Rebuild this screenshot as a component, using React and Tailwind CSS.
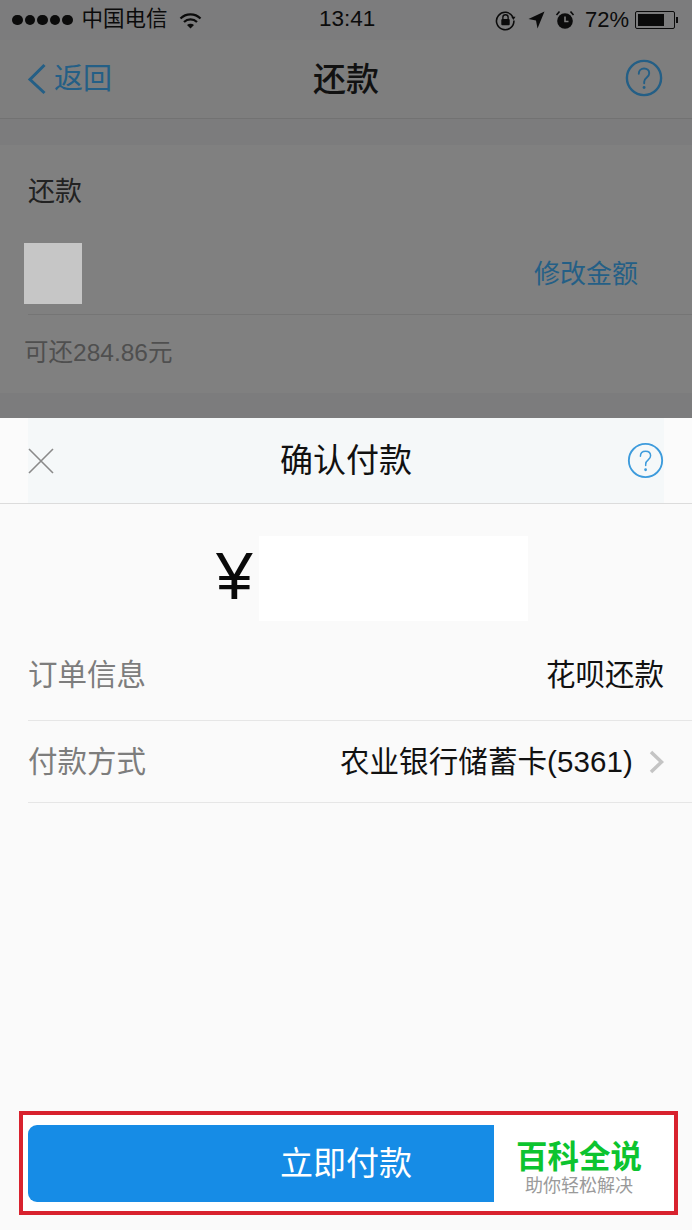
import React from 'react';

function HelpIcon({ className, stroke, width = 2.5 }) {
    return (
        <svg className={className} viewBox="0 0 40 40" fill="none">
            <ellipse cx="20" cy="20" rx="18" ry="18" stroke={stroke} strokeWidth={width} />
            <path d="M14.5 15.5c0-3.4 2.4-5.5 5.6-5.5 3.2 0 5.4 2 5.4 4.9 0 2-1 3.200-2.600 4.500-1.800 1.400-2.700 2.500-2.700 4.600v1.500" stroke={stroke} strokeWidth={width * 0.8} strokeLinecap="round" />
            <circle cx="20.100" cy="30" r="1.500" fill={stroke} />
        </svg>
    );
}

function StatusBar() {
    return (
        <div className="h-[40px] pl-[12px] pr-[14px] flex items-center justify-between text-[#0b0b0b] relative">
            <div className="flex items-center">
                <div className="flex gap-[2px]">
                    {[0, 1, 2, 3, 4].map((i) => (
                        <span key={i} className="w-[10.500px] h-[10.500px] rounded-full bg-[#0b0b0b]" />
                    ))}
                </div>
                <span className="ml-[9px] text-[21.500px] leading-none">中国电信</span>
                <svg className="ml-[11px] w-[23px] h-[17px]" viewBox="0 0 23 17" fill="none" stroke="#0b0b0b" strokeWidth="2.200">
                    <path d="M1.500 6.500c5.500-5.500 14.500-5.500 20 0" />
                    <path d="M5 10c3.600-3.500 9.400-3.500 13 0" />
                    <path d="M11.500 16.500 8 13c2-1.800 5-1.800 7 0z" fill="#0b0b0b" stroke="none" />
                </svg>
            </div>
            <span className="absolute left-[319px] top-[5px] text-[22.500px] leading-[28px] font-['Liberation_Sans',sans-serif]">13:41</span>
            <div className="flex items-center">
                <svg className="w-[21px] h-[21px]" viewBox="0 0 20 20" fill="none">
                    <path d="M17 6.500A8.300 8.300 0 1 0 18 10" stroke="#0b0b0b" strokeWidth="1.500" />
                    <path d="M15.500 6.500h4l-2 3z" fill="#0b0b0b" />
                    <rect x="6" y="8.500" width="8" height="6" rx="1" fill="#0b0b0b" />
                    <path d="M7.500 8.500V7a2.500 2.500 0 0 1 5 0v1.500" stroke="#0b0b0b" strokeWidth="1.300" />
                </svg>
                <svg className="ml-[12px] w-[17px] h-[18px]" viewBox="0 0 17 18">
                    <path d="M16.500 0.500 9.500 17.500 8 9.500 0.500 8z" fill="#0b0b0b" />
                </svg>
                <svg className="ml-[10px] w-[20px] h-[20px]" viewBox="0 0 19 20" fill="none">
                    <circle cx="9.500" cy="11" r="7.800" fill="#0b0b0b" />
                    <path d="M9.500 6.500V11.500H13" stroke="#7d7d7d" strokeWidth="1.600" />
                    <path d="M1 5 4 1.500M18 5 15 1.500" stroke="#0b0b0b" strokeWidth="1.600" />
                </svg>
                <span className="ml-[10px] text-[22px] leading-none font-['Liberation_Sans',sans-serif]">72%</span>
                <div className="ml-[6px] w-[40px] h-[18px] border border-[#0b0b0b] rounded-[2px] p-[2px]">
                    <div className="w-[26px] h-full bg-[#0b0b0b]" />
                </div>
                <span className="ml-[1px] w-[2px] h-[6px] bg-[#0b0b0b]" />
            </div>
        </div>
    );
}

function Row({ label, last, children }) {
    return (
        <div className={`ml-[28px] flex items-center justify-between pr-[28px] border-b border-[#e6e6e6] ${last ? 'h-[82px]' : 'h-[89px] pb-[2px]'}`}>
            <span className="text-[#7d7d7d] text-[29.500px] leading-none">{label}</span>
            {children}
        </div>
    );
}

export default function App() {
    return (
        <div className="w-[692px] h-[1230px] bg-[#7c7c7d] flex flex-col overflow-hidden font-['Liberation_Sans','Noto_Sans_CJK_SC',sans-serif]">
            {/* dimmed page behind the sheet */}
            <StatusBar />
            <div className="relative h-[79px] flex items-center justify-center border-b border-[#727272] bg-[#7e7e7e]">
                <div className="absolute left-[27px] top-[23px] flex items-center text-[#245f86]">
                    <svg className="w-[20px] h-[32px]" viewBox="0 0 20 32" fill="none" stroke="#245f86" strokeWidth="3">
                        <path d="M17.500 2 3 16.500 17.500 30" />
                    </svg>
                    <span className="ml-[7px] text-[29px] leading-none">返回</span>
                </div>
                <span className="text-[33px] leading-none text-[#111] font-medium">还款</span>
                <HelpIcon className="absolute left-[625px] top-[19px] w-[38px] h-[38px]" stroke="#245f86" />
            </div>

            <div className="mt-[26px] h-[248px] bg-[#808080] flex flex-col">
                <div className="pl-[28px] pt-[32px] text-[27px] leading-[30px] text-[#222]">还款</div>
                <div className="mt-[36px] pl-[24px] pr-[54px] flex items-center justify-between">
                    <div className="w-[58px] h-[61px] bg-[#c6c6c6]" />
                    <span className="text-[#245f86] text-[26px] leading-none">修改金额</span>
                </div>
                <div className="ml-[28px] mt-[10px] border-t border-[#757575]" />
                <div className="pl-[24px] pt-[23px] text-[24.500px] leading-[30px] text-[#4f4f4f]">可还284.86元</div>
            </div>

            {/* payment sheet */}
            <div className="mt-[25px] flex-1 bg-[#fafafa] flex flex-col">
                <div className="h-[86px] bg-[#fbfbfb] border-b border-[#dcdcdc] px-[28px]">
                    <div className="h-full bg-[#f5f8f9] flex items-center justify-between">
                        <div className="w-[37px]">
                            <svg className="w-[26px] h-[26px]" viewBox="0 0 26 26" fill="none" stroke="#8a8a8a" strokeWidth="1.600">
                                <path d="M1 1 25 25M25 1 1 25" />
                            </svg>
                        </div>
                        <span className="text-[33px] leading-none text-[#111]">确认付款</span>
                        <HelpIcon className="w-[37px] h-[37px]" stroke="#3d9bdc" width={2} />
                    </div>
                </div>

                <div className="mt-[32px] pl-[216px] flex items-center">
                    <span className="w-[43px] pb-[5px] text-[66px] leading-none text-[#0a0a0a] font-['Liberation_Sans',sans-serif]">¥</span>
                    <div className="w-[269px] h-[85px] bg-white" />
                </div>

                <div className="mt-[11px]">
                    <Row label="订单信息">
                        <span className="text-[29.500px] leading-none text-[#111]">花呗还款</span>
                    </Row>
                    <Row label="付款方式" last>
                        <div className="flex items-center">
                            <span className="text-[29.500px] leading-none text-[#111] tracking-[0.100px]">农业银行储蓄卡(5361)</span>
                            <svg className="ml-[16px] w-[15px] h-[24px]" viewBox="0 0 15 24" fill="none" stroke="#c4c4c4" strokeWidth="3.500">
                                <path d="M2 2 12.500 12 2 22" />
                            </svg>
                        </div>
                    </Row>
                </div>

                {/* red annotation box round the button */}
                <div className="mt-[308px] ml-[19px] w-[659px] h-[104px] border-[4px] border-[#d8222e] bg-white pt-[10px] pl-[5px]">
                    <div className="relative w-[636px] h-[77px] bg-[#168ce6] rounded-[9px] flex items-center justify-center">
                        <span className="text-white text-[33px] leading-none">立即付款</span>
                        <div className="absolute left-[466px] top-0 w-[170px] h-[77px] bg-white flex flex-col items-center">
                            <span className="mt-[14px] text-[#0cc42f] text-[31.500px] leading-[36px] font-bold">百科全说</span>
                            <span className="text-[#9a9a9a] text-[18px] leading-[22px]">助你轻松解决</span>
                        </div>
                    </div>
                </div>
            </div>
        </div>
    );
}
